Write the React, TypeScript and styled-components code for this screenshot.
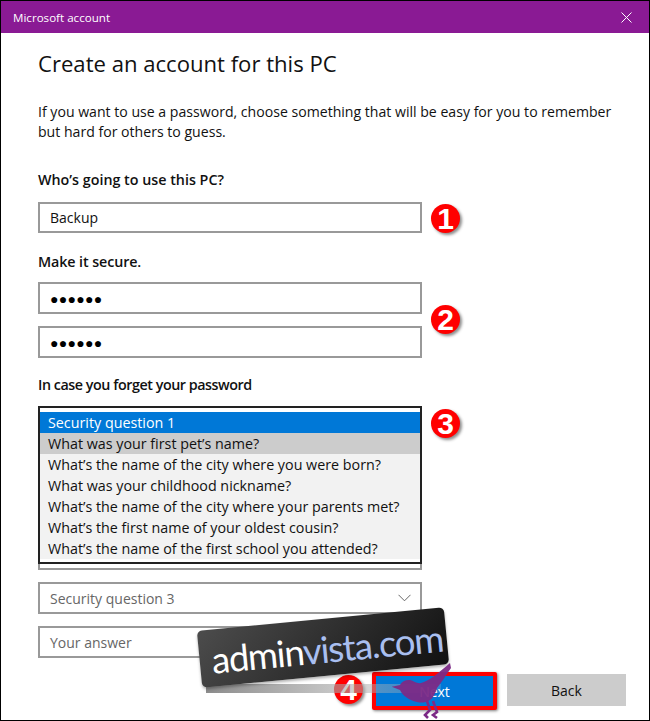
import React from "react";
import styled, { createGlobalStyle } from "styled-components";

const questions = [
  "What was your first pet’s name?",
  "What’s the name of the city where you were born?",
  "What was your childhood nickname?",
  "What’s the name of the city where your parents met?",
  "What’s the first name of your oldest cousin?",
  "What’s the name of the first school you attended?",
];

const GlobalStyle = createGlobalStyle`
  html, body {
    margin: 0;
    padding: 0;
    background: #fff;
  }
  * {
    box-sizing: border-box;
  }
`;

const App = () => {
  return (
    <Window>
      <GlobalStyle />
      <TitleBar>
        <WindowTitle>Microsoft account</WindowTitle>
        <CloseIcon width="11" height="11" viewBox="0 0 11 11">
          <path d="M0.5 0.5L10.5 10.5M10.5 0.5L0.5 10.5" stroke="#fff" strokeWidth="1" fill="none" />
        </CloseIcon>
      </TitleBar>
      <Content>
        <Heading>Create an account for this PC</Heading>
        <Intro>
          If you want to use a password, choose something that will be easy for you to remember
          <br />
          but hard for others to guess.
        </Intro>
        <Label $top={28} $bottom={12}>Who’s going to use this PC?</Label>
        <Field $height={31}>Backup</Field>
        <Label $top={19} $bottom={10} $spacing={-0.1}>Make it secure.</Label>
        <FieldStack>
          <Field>
            <Dots>●●●●●●</Dots>
          </Field>
          <Field>
            <Dots>●●●●●●</Dots>
          </Field>
        </FieldStack>
        <Label $top={17} $bottom={11} $spacing={-0.45}>In case you forget your password</Label>
        <SecuritySection>
          <FieldStack>
            <Field />
            <Field />
            <Field />
            <Field />
            <Field $muted>
              Security question 3
              <svg width="13" height="8" viewBox="0 0 13 8">
                <path d="M0.5 0.8L6.5 6.8L12.5 0.8" stroke="#666" strokeWidth="1" fill="none" />
              </svg>
            </Field>
            <Field $muted>Your answer</Field>
          </FieldStack>
          <QuestionList>
            <Option $selected>Security question 1</Option>
            {questions.map((question, idx) => (
              <Option key={idx} $hovered={idx === 0}>
                {question}
              </Option>
            ))}
          </QuestionList>
        </SecuritySection>
        <ButtonRow>
          <NextHighlight>
            <NextButton>Next</NextButton>
          </NextHighlight>
          <BackButton>Back</BackButton>
        </ButtonRow>
      </Content>

      <Badge $x={431} $y={204}>1</Badge>
      <Badge $x={431} $y={305}>2</Badge>
      <Badge $x={431} $y={409}>3</Badge>
      <Badge $x={334} $y={675}>4</Badge>

      <WatermarkShadow />
      <Watermark>
        admin<WatermarkAccent>vista.com</WatermarkAccent>
      </Watermark>
      <Bird width="62" height="58" viewBox="0 0 62 58">
        <path
          d="M0.7 23.7L9 22C11 18 15 16.5 19 17C23 18 26 21 30 20C38 18 46 11 59 0L60 5C55 12 51 19 46 25C44 31 42 35 39 37C34 40 30 40 26 39C18 37 12 33 9 27Z"
          fill="#7c2a86"
          fillOpacity="0.95"
        />
        <path
          d="M36 38L39 47L34 52L37 55M42 38L46 49L42 52L46 55"
          stroke="#7c2a86"
          strokeWidth="2.6"
          fill="none"
        />
      </Bird>
    </Window>
  );
};

export default App;

const Window = styled.div`
  position: relative;
  width: 650px;
  height: 721px;
  overflow: hidden;
  background: #fff;
  border: 1px solid #000;
  color: #111;
  font-family: "Open Sans", "Liberation Sans", sans-serif;
`;

const TitleBar = styled.div`
  display: flex;
  align-items: center;
  justify-content: space-between;
  height: 32px;
  padding: 0 17px 0 12px;
  background: #8a1a94;
`;

const WindowTitle = styled.span`
  color: #fff;
  font-size: 11.6px;
`;

const CloseIcon = styled.svg`
  display: block;
`;

const Content = styled.div`
  display: flex;
  flex-direction: column;
  width: 625px;
  padding-left: 37px;
`;

const Heading = styled.h1`
  margin: 15px 0 0;
  font-size: 22.1px;
  line-height: 30px;
  font-weight: 400;
`;

const Intro = styled.p`
  margin: 24px 0 0;
  font-size: 14.1px;
  line-height: 20px;
`;

const Label = styled.div<{ $top: number; $bottom: number; $spacing?: number }>`
  margin: ${(props) => props.$top}px 0 ${(props) => props.$bottom}px;
  font-size: 14.3px;
  line-height: 20px;
  font-weight: 600;
  letter-spacing: ${(props) => props.$spacing ?? 0}px;
`;

const FieldStack = styled.div`
  display: flex;
  flex-direction: column;
  gap: 12px;
  width: 384px;
`;

const Field = styled.div<{ $muted?: boolean; $height?: number }>`
  display: flex;
  align-items: center;
  justify-content: space-between;
  width: 384px;
  height: ${(props) => props.$height ?? 32}px;
  padding: 0 9px 0 10px;
  border: 2px solid #999;
  background: #fff;
  font-size: 14px;
  color: ${(props) => (props.$muted ? "#666" : "#111")};
`;

const Dots = styled.span`
  font-size: 14px;
  letter-spacing: 0.3px;
  color: #000;
`;

const SecuritySection = styled.div`
  position: relative;
  width: 384px;
`;

const QuestionList = styled.div`
  position: absolute;
  top: 0;
  left: 0;
  width: 384px;
  height: 158px;
  padding: 4px 0 3px;
  border: 2px solid #222;
  background: #fff;
`;

const Option = styled.div<{ $selected?: boolean; $hovered?: boolean }>`
  height: 21px;
  padding-left: 8px;
  font-size: 14.3px;
  line-height: 21px;
  white-space: nowrap;
  color: ${(props) => (props.$selected ? "#fff" : "#111")};
  background: ${(props) =>
    props.$selected ? "#0078d7" : props.$hovered ? "#ccc" : "#f2f2f2"};
`;

const ButtonRow = styled.div`
  display: flex;
  gap: 10px;
  align-items: flex-start;
  margin: 14px 0 0 334px;
`;

const NextHighlight = styled.div`
  padding: 4px;
  background: #f00;
  box-shadow: 1px 1px 3px rgba(0, 0, 0, 0.5);
  border-radius: 2px;
`;

const NextButton = styled.div`
  display: flex;
  align-items: center;
  justify-content: center;
  width: 117px;
  height: 30px;
  background: #0078d7;
  color: #fff;
  font-size: 14px;
`;

const BackButton = styled.div`
  display: flex;
  align-items: center;
  justify-content: center;
  width: 119px;
  height: 32px;
  margin-top: 2px;
  background: #ccc;
  color: #111;
  font-size: 14px;
`;

const Badge = styled.div<{ $x: number; $y: number }>`
  position: absolute;
  left: ${(props) => props.$x - 1}px;
  top: ${(props) => props.$y - 1}px;
  width: 29px;
  height: 29px;
  border-radius: 50%;
  background: #f00;
  box-shadow: 2px 2px 3px rgba(0, 0, 0, 0.45);
  color: #fff;
  font-family: "Liberation Sans", sans-serif;
  font-size: 30px;
  font-weight: 700;
  line-height: 30px;
  text-align: center;
`;

const WatermarkShadow = styled.div`
  position: absolute;
  left: 205px;
  top: 683px;
  width: 235px;
  height: 9px;
  background: linear-gradient(90deg, rgba(120, 120, 120, 0.85), rgba(170, 170, 170, 0.6) 60%, rgba(200, 200, 200, 0.2));
`;

const Watermark = styled.div`
  position: absolute;
  left: 198px;
  top: 618px;
  width: 248px;
  height: 57px;
  padding-left: 12px;
  border-radius: 5px;
  transform: rotate(-5.5deg);
  background: linear-gradient(135deg, #4c4c4c, #111);
  box-shadow: 0 2px 3px rgba(0, 0, 0, 0.3);
  color: #fff;
  font-family: "Lato", sans-serif;
  font-size: 36.6px;
  line-height: 60px;
  letter-spacing: -1.2px;
  white-space: nowrap;
`;

const WatermarkAccent = styled.span`
  color: #a9bff0;
`;

const Bird = styled.svg`
  position: absolute;
  left: 390px;
  top: 662px;
`;
